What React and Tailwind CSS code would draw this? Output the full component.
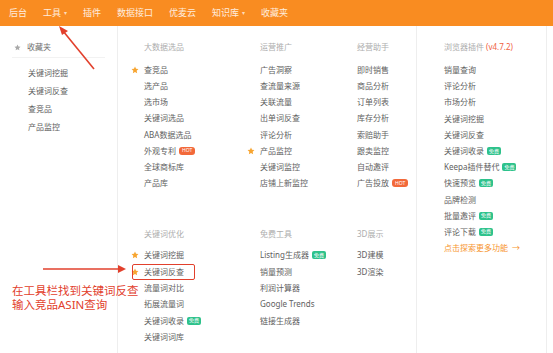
import React from 'react';

const Star = ({ color = '#f7a531', size = 8 }) => (
  <svg width={size} height={size} viewBox="0 0 24 24" fill={color}>
    <path d="M12 1.8l3.1 6.6 7.2.9-5.3 5 1.4 7.1L12 17.9l-6.4 3.5 1.4-7.1-5.3-5 7.2-.9z" />
  </svg>
);

const Badge = ({ type }) =>
  type === 'free' ? (
    <span className="ml-[3px] inline-flex h-[8px] items-center rounded-[2px] bg-[#2ec28b] px-[2px] text-[5px] leading-none text-white">
      免费
    </span>
  ) : (
    <span className="ml-[3px] inline-flex h-[8px] items-center rounded-[3px] bg-[#f2693a] px-[3px] text-[5px] leading-none text-white">
      HOT
    </span>
  );

const Item = ({ item, h = 'h-[16.15px]' }) => (
  <div className={`relative flex items-center ${h}`}>
    <span className="flex w-[13px] shrink-0 items-center">{item.star && <Star />}</span>
    <span className="whitespace-nowrap">{item.label}</span>
    {item.badge && <Badge type={item.badge} />}
    {item.boxed && (
      <span className="absolute left-[1px] top-[0px] h-[16px] w-[63px] rounded-[2px] border-[1.5px] border-[#e2402c]" />
    )}
  </div>
);

const Header = ({ children }) => (
  <div className="flex h-[16px] items-center pl-[13px] text-[#adadad]">{children}</div>
);

const Column = ({ width, top, bottom }) => (
  <div className={`${width} shrink-0 pt-[13px]`}>
    <Header>{top.title}</Header>
    <div className="mt-[7px]">
      {top.items.map((it) => (
        <Item key={it.label} item={it} />
      ))}
    </div>
    <div className="mt-[35px]">
      <Header>{bottom.title}</Header>
    </div>
    <div className="mt-[5px]">
      {bottom.items.map((it) => (
        <Item key={it.label} item={it} h="h-[16.4px]" />
      ))}
    </div>
  </div>
);

const columns = [
  {
    width: 'w-[116px]',
    top: {
      title: '大数据选品',
      items: [
        { label: '查竞品', star: true },
        { label: '选产品' },
        { label: '选市场' },
        { label: '关键词选品' },
        { label: 'ABA数据选品' },
        { label: '外观专利', badge: 'hot' },
        { label: '全球商标库' },
        { label: '产品库' },
      ],
    },
    bottom: {
      title: '关键词优化',
      items: [
        { label: '关键词挖掘', star: true },
        { label: '关键词反查', star: true, boxed: true },
        { label: '流量词对比' },
        { label: '拓展流量词' },
        { label: '关键词收录', badge: 'free' },
        { label: '关键词词库' },
      ],
    },
  },
  {
    width: 'w-[97px]',
    top: {
      title: '运营推广',
      items: [
        { label: '广告洞察' },
        { label: '查流量来源' },
        { label: '关联流量' },
        { label: '出单词反查' },
        { label: '评论分析' },
        { label: '产品监控', star: true },
        { label: '关键词监控' },
        { label: '店铺上新监控' },
      ],
    },
    bottom: {
      title: '免费工具',
      items: [
        { label: 'Listing生成器', badge: 'free' },
        { label: '销量预测' },
        { label: '利润计算器' },
        { label: 'Google Trends' },
        { label: '链接生成器' },
      ],
    },
  },
  {
    width: 'w-[72px]',
    top: {
      title: '经营助手',
      items: [
        { label: '即时销售' },
        { label: '商品分析' },
        { label: '订单列表' },
        { label: '库存分析' },
        { label: '索赔助手' },
        { label: '跟卖监控' },
        { label: '自动邀评' },
        { label: '广告投放', badge: 'hot' },
      ],
    },
    bottom: {
      title: '3D展示',
      items: [{ label: '3D建模' }, { label: '3D渲染' }],
    },
  },
];

const plugin = [
  { label: '销量查询' },
  { label: '评论分析' },
  { label: '市场分析' },
  { label: '关键词挖掘' },
  { label: '关键词反查' },
  { label: '关键词收录', badge: 'free' },
  { label: 'Keepa插件替代', badge: 'free' },
  { label: '快速预览', badge: 'free' },
  { label: '品牌检测' },
  { label: '批量邀评', badge: 'free' },
  { label: '评论下载', badge: 'free' },
];

const nav = [
  { label: '后台' },
  { label: '工具', arrow: true },
  { label: '插件' },
  { label: '数据接口' },
  { label: '优麦云' },
  { label: '知识库', arrow: true },
  { label: '收藏夹' },
];

export default function App() {
  return (
    <div className="relative h-[353px] w-[553px] overflow-hidden bg-white font-['Noto_Sans','Noto_Sans_CJK_SC',sans-serif] text-[8px] text-[#616161]">
      <nav className="flex h-[26px] items-center gap-[16px] bg-[#f98c21] pl-[9px] text-[9px] text-white/85">
        {nav.map((n) => (
          <span key={n.label} className="flex items-center">
            {n.label}
            {n.arrow && <span className="ml-[3px] text-[6px] text-white/70">▾</span>}
          </span>
        ))}
      </nav>

      <div className="flex h-[327px]">
        <aside className="w-[118px] shrink-0 border-r border-[#eeeeee] pt-[13px]">
          <div className="mx-[12px] flex h-[19px] items-start border-b border-[#f2f2f2]">
            <div className="flex h-[16px] items-center">
              <span className="flex w-[15px] items-center pl-[2px]">
                <Star color="#a9a9a9" size={7} />
              </span>
              <span className="text-[#707070]">收藏夹</span>
            </div>
          </div>
          <div className="mt-[6px] pl-[28px]">
            {['关键词挖掘', '关键词反查', '查竞品', '产品监控'].map((s) => (
              <div key={s} className="flex h-[18px] items-center">
                {s}
              </div>
            ))}
          </div>
        </aside>

        <main className="flex pl-[13px]">
          {columns.map((c) => (
            <Column key={c.top.title} {...c} />
          ))}
          <div className="w-[131px] shrink-0 border-x border-[#eeeeee] pl-[14px] pt-[13px]">
            <Header>
              浏览器插件 <span className="ml-[2px] text-[#f0623f]">(v4.7.2)</span>
            </Header>
            <div className="mt-[7px]">
              {plugin.map((it) => (
                <Item key={it.label} item={it} h="h-[16.2px]" />
              ))}
              <div className="flex h-[16.2px] items-center pl-[13px] text-[#f7952f]">
                点击探索更多功能<span className="ml-[4px]">→</span>
              </div>
            </div>
          </div>
        </main>
      </div>

      <svg className="pointer-events-none absolute left-0 top-0" width="553" height="353">
        <line x1="94" y1="69" x2="63" y2="31" stroke="#e2402c" strokeWidth="1.6" />
        <polygon points="59,26 68,31 62,35" fill="#e2402c" />
        <line x1="43" y1="269" x2="120" y2="269" stroke="#e2402c" strokeWidth="1.6" />
        <polygon points="126,269 118,265 118,273" fill="#e2402c" />
      </svg>
      <div className="absolute left-[12px] top-[284px] text-[11.5px] leading-[14px] text-[#e2402c]">
        <div>在工具栏找到关键词反查</div>
        <div>输入竞品ASIN查询</div>
      </div>
    </div>
  );
}
